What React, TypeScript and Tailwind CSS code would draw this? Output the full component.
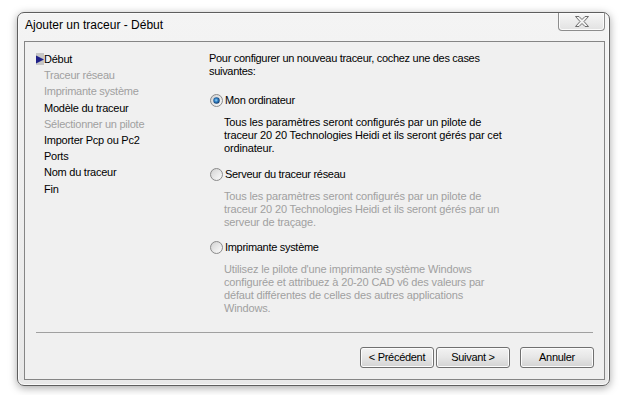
import React from "react";

const Radio = ({ checked, id }: { checked?: boolean; id: string }) => (
  <svg width="13" height="13" viewBox="0 0 13 13" className="shrink-0">
    <defs>
      <linearGradient id={`ring-${id}`} x1="0" y1="0" x2="1" y2="1">
        <stop offset="0" stopColor="#cfcfcf" />
        <stop offset="1" stopColor="#fbfbfb" />
      </linearGradient>
      <linearGradient id={`in-${id}`} x1="0" y1="0" x2="1" y2="1">
        <stop offset="0" stopColor="#d8d8d8" />
        <stop offset="1" stopColor="#f8f8f8" />
      </linearGradient>
      <radialGradient id={`dot-${id}`} cx="0.45" cy="0.45" r="0.6">
        <stop offset="0" stopColor="#9ad6f7" />
        <stop offset="0.45" stopColor="#2f7fc4" />
        <stop offset="1" stopColor="#0e2d59" />
      </radialGradient>
    </defs>
    <circle cx="6.5" cy="6.5" r="6" fill={`url(#ring-${id})`} stroke="#8a8a8a" strokeWidth="1" />
    <circle cx="6.5" cy="6.5" r="4.2" fill={`url(#in-${id})`} />
    {checked && <circle cx="6.5" cy="6.5" r="3.2" fill={`url(#dot-${id})`} />}
  </svg>
);

const navItems: { label: string; disabled?: boolean; current?: boolean }[] = [
  { label: "Début", current: true },
  { label: "Traceur réseau", disabled: true },
  { label: "Imprimante système", disabled: true },
  { label: "Modèle du traceur" },
  { label: "Sélectionner un pilote", disabled: true },
  { label: "Importer Pcp ou Pc2" },
  { label: "Ports" },
  { label: "Nom du traceur" },
  { label: "Fin" },
];

const Button = ({ children, className = "" }: { children: React.ReactNode; className?: string }) => (
  <div
    className={`h-[21px] w-[74px] rounded-[3px] border border-[#707070] bg-linear-to-b from-[#f3f3f3] via-[#e6e6e6] to-[#d3d3d3] shadow-[inset_0_0_0_1px_#fcfcfc] flex items-center justify-center text-black text-[11px] leading-[13px] tracking-[-0.3px] ${className}`}
  >
    {children}
  </div>
);

export default function App() {
  return (
    <div className="w-[622px] h-[395px] bg-white pt-[12px] pl-[17px] font-['Liberation_Sans',Arial,sans-serif] overflow-hidden">
      <div className="w-[593px] h-[374px] rounded-[7px] border border-[#5e5e5e] bg-linear-to-b from-[#f4f4f4] to-[#e8e8e8] shadow-[0_2px_8px_rgba(0,0,0,0.35),inset_0_0_0_1px_#fafafa] flex flex-col">
        {/* Title bar */}
        <div className="h-[28px] flex items-start shrink-0">
          <div className="pl-[7px] pt-[5px] text-[12px] leading-[15px] text-black">Ajouter un traceur - Début</div>
          <div className="ml-auto mr-[4px] w-[47px] h-[18px] rounded-b-[4px] border border-t-0 border-[#8d8d8d] bg-linear-to-b from-[#f7f7f7] to-[#e2e2e2] shadow-[inset_0_0_0_1px_#fbfbfb] flex items-center justify-center">
            <svg width="14" height="11" viewBox="0 0 14 11">
              <polygon
                points="0.5,0.5 4,0.5 7,3.5 10,0.5 13.5,0.5 9,5.5 13.5,10.5 10,10.5 7,7.5 4,10.5 0.5,10.5 5,5.5"
                fill="#f2f2f2"
                stroke="#6c6c6c"
                strokeWidth="1"
                strokeLinejoin="round"
              />
            </svg>
          </div>
        </div>

        {/* Client area */}
        <div className="ml-[6px] w-[581px] h-[339px] border border-[#858585] bg-[#f0f0f0] flex flex-col text-[11px]">
          <div className="h-[290px] flex">
            {/* Nav */}
            <div className="w-[184px] pl-[11px] pt-[9px] flex flex-col leading-[16.2px] tracking-[-0.25px]">
              {navItems.map((it) => (
                <div key={it.label} className="flex items-center h-[16.2px]">
                  <div className="w-[8px] h-[12px] shrink-0">
                    {it.current && (
                      <svg width="8" height="12" viewBox="0 0 8 12">
                        <rect x="0" y="0" width="8" height="12" fill="#c6c6c6" />
                        <polygon points="0,2.5 8,6.5 0,10.5" fill="#1f2088" />
                      </svg>
                    )}
                  </div>
                  <span className={it.disabled ? "text-[#a0a0a0]" : "text-black"}>{it.label}</span>
                </div>
              ))}
            </div>

            {/* Right */}
            <div className="flex-1 pt-[10px] flex flex-col">
              <div className="leading-[13px] text-black tracking-[-0.3px]">
                Pour configurer un nouveau traceur, cochez une des cases
                <br />
                suivantes:
              </div>

              <div className="mt-[16px] flex items-center h-[13px] pl-[1px] tracking-[-0.3px]">
                <Radio checked id="a" />
                <span className="ml-[2px] text-black">Mon ordinateur</span>
              </div>
              <div className="mt-[9px] pl-[15px] leading-[13px] text-black tracking-[-0.15px]">
                Tous les paramètres seront configurés par un pilote de
                <br />
                traceur 20 20 Technologies Heidi et ils seront gérés par cet
                <br />
                ordinateur.
              </div>

              <div className="mt-[13px] flex items-center h-[13px] pl-[1px] tracking-[-0.3px]">
                <Radio id="b" />
                <span className="ml-[2px] text-black">Serveur du traceur réseau</span>
              </div>
              <div className="mt-[9px] pl-[15px] leading-[13px] text-[#a0a0a0] tracking-[-0.15px]">
                Tous les paramètres seront configurés par un pilote de
                <br />
                traceur 20 20 Technologies Heidi et ils seront gérés par un
                <br />
                serveur de traçage.
              </div>

              <div className="mt-[12px] flex items-center h-[13px] pl-[1px] tracking-[-0.3px]">
                <Radio id="c" />
                <span className="ml-[2px] text-black">Imprimante système</span>
              </div>
              <div className="mt-[9px] pl-[15px] leading-[13px] text-[#a0a0a0] tracking-[-0.15px]">
                Utilisez le pilote d'une imprimante système Windows
                <br />
                configurée et attribuez à 20-20 CAD v6 des valeurs par
                <br />
                défaut différentes de celles des autres applications
                <br />
                Windows.
              </div>
            </div>
          </div>

          <div className="mx-[11px] h-px bg-[#a0a0a0]" />

          <div className="mt-[14px] flex pr-[10px] justify-end">
            <Button>&lt; Précédent</Button>
            <Button className="ml-[2px]">Suivant &gt;</Button>
            <Button className="ml-[10px]">Annuler</Button>
          </div>
        </div>
      </div>
    </div>
  );
}
